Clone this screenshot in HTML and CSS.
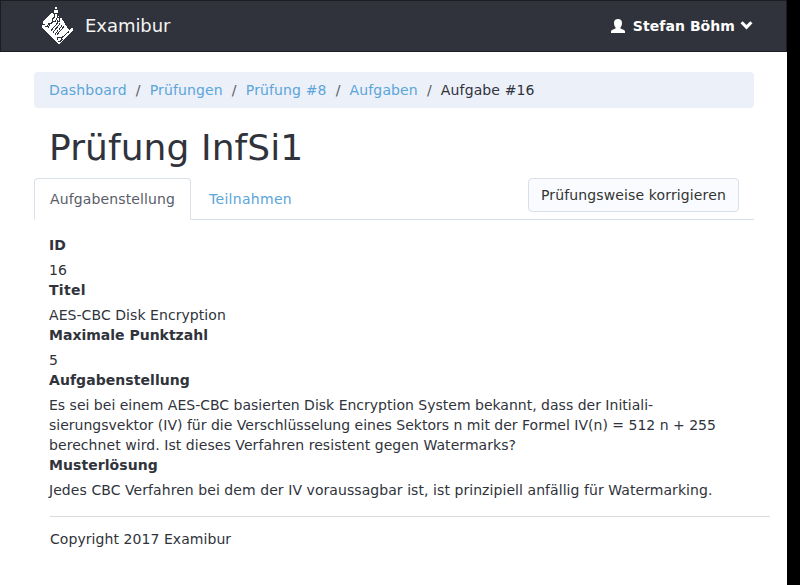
FILE: index.html
```
<!DOCTYPE html>
<html lang="de">
<head>
<meta charset="utf-8">
<title>Examibur</title>
<link rel="stylesheet" href="styles.css">
</head>
<body>
<div class="page">
  <header class="navbar">
    <a class="brand">
      <svg class="logo" viewBox="0 0 36 41" shape-rendering="crispEdges">
        <path fill="#fff" d="M11 8h3v5h7v-2l8 9v6h2v-1l2-2v3L19 39 2 23v-2l1-4z"/>
        <path fill="#30333b" d="M20 11l9 14 3-6-8-12z"/>
        <path fill="#fff" d="M15 2h2v3h1v3h-1v4h2v4h-6v-4h1V8h-1V5h2zM18 11l3 2 8 13 2-3h2v3L19 39l-5-5z"/>
        <g stroke="#30333b" stroke-width="1" fill="none">
          <path d="M13.500 5v3h1v4l-2 2v2h3l1-2 1 2h2v-3l-2-1V8M14 8.500h4M15 4.500h2M2 19.500h3M5 21.500h2l2-3h2l2-2M8 22.500l2-3M11 25.500l7-8M13 27.500l7-9M15 29.500l3-4M19 24.500l3-4M17 29.500l7-8M17 34.500l1-2h3l1 2-2 2h-2M21 33.500l8-7"/>
        </g>
      </svg>
      <span>Examibur</span>
    </a>
    <div class="user">
      <svg class="person" viewBox="0 0 14 14"><path fill="#fff" d="M7 0c2.700 0 4 1.600 4 4 0 2-.6 3.200-1.500 4.200v1.300l3.500 1.500c.7.400 1 .8 1 1.500V14H0v-1.500c0-.7.3-1.100 1-1.500l3.500-1.500V8.200C3.600 7.200 3 6 3 4c0-2.400 1.300-4 4-4z"/></svg>
      <span>Stefan Böhm</span>
      <svg class="chevron" viewBox="0 0 12 9"><path fill="#fff" d="M2.200.2 6 4 9.800.2 12 2.300 6 8.500 0 2.300z"/></svg>
    </div>
  </header>
  <main class="content">
    <nav class="breadcrumb">
      <a>Dashboard</a><i>/</i><a class="tight">Prüfungen</a><i>/</i><a class="tight">Prüfung #8</a><i>/</i><a class="tight">Aufgaben</a><i>/</i><span class="tight">Aufgabe #16</span>
    </nav>
    <h1>Prüfung InfSi1</h1>
    <div class="tabs">
      <a class="tab active">Aufgabenstellung</a>
      <a class="tab">Teilnahmen</a>
      <button class="btn">Prüfungsweise korrigieren</button>
    </div>
    <dl>
      <dt>ID</dt><dd>16</dd>
      <dt class="loose">Titel</dt><dd>AES-CBC Disk Encryption</dd>
      <dt class="flush">Maximale Punktzahl</dt><dd>5</dd>
      <dt>Aufgabenstellung</dt>
      <dd><span class="fit">Es sei bei einem AES-CBC basierten Disk Encryption System bekannt, dass der Initiali-<br>sierungsvektor (IV) für die Verschlüsselung eines Sektors n mit der Formel IV(n) = 512 n + 255</span><br>berechnet wird. Ist dieses Verfahren resistent gegen Watermarks?</dd>
      <dt>Musterlösung</dt><dd>Jedes CBC Verfahren bei dem der IV voraussagbar ist, ist prinzipiell anfällig für Watermarking.</dd>
    </dl>
  </main>
  <footer>Copyright 2017 Examibur</footer>
</div>
</body>
</html>
```
FILE: styles.css
```
* { box-sizing: border-box; }
html { background: #000; }
body {
  margin: 0;
  font: 14px/20px "DejaVu Sans", sans-serif;
  letter-spacing: 0.065px;
  color: #30333b;
}
.page { width: 787px; height: 585px; background: #fff; overflow: hidden; }
.navbar {
  height: 52px;
  padding: 0 33px 0 39px;
  display: flex;
  justify-content: space-between;
  background: #30333b;
  border: 1px solid #1b1d22;
  color: #fff;
}
.brand { display: flex; align-items: center; font-size: 18px; color: #f4f4f4; letter-spacing: -0.05px; }
.logo { width: 36px; height: 41px; margin: -1px 9px 0 0; }
.user { display: flex; align-items: center; font-weight: bold; }
.person { width: 14px; height: 14px; margin: -1px 8px 0 0; }
.chevron { width: 13px; height: 9px; margin: -2px 0 0 5px; }
.content { width: 720px; margin: 20px 0 0 34px; }
.breadcrumb {
  display: flex;
  height: 36px;
  padding: 8px 15px;
  background: #ecf0f9;
  border-radius: 4px;
  letter-spacing: 0.2px;
}
.breadcrumb .tight { letter-spacing: 0.13px; }
a { color: #5ba5d9; }
.breadcrumb i { font-style: normal; color: #555960; width: 23px; text-align: center; }
h1 {
  margin: 20px 15px 10px;
  font-size: 36px;
  line-height: 40px;
  font-weight: 400;
  letter-spacing: 0.08px;
}
.tabs { display: flex; height: 42px; border-bottom: 1px solid #d8e0ea; }
.tab {
  height: 42px;
  padding: 10px 16px 0;
  border: 1px solid transparent;
  margin-right: 1px;
  letter-spacing: 0.3px;
}
.tab.active {
  width: 157px;
  padding: 10px 0 0 15px;
  color: #595d68;
  background: #fff;
  border-color: #d8e0ea;
  border-bottom-color: #fff;
  border-radius: 4px 4px 0 0;
  letter-spacing: 0.13px;
}
.btn {
  height: 34px;
  width: 211px;
  margin: 0 15px 0 auto;
  padding: 0;
  font: inherit;
  letter-spacing: 0.13px;
  color: #333;
  background: #f9fbfe;
  border: 1px solid #d8e0ea;
  border-radius: 4px;
}
dl { margin: 15px 0 0 15px; white-space: nowrap; }
dt { font-weight: bold; margin-bottom: 5px; }
dt.loose { letter-spacing: 0.3px; }
dt.flush { letter-spacing: 0; }
dd { margin: 0; }
.fit { letter-spacing: 0.005px; }
footer {
  width: 720px;
  margin: 16px 0 0 50px;
  padding: 12px 0 0;
  border-top: 1px solid #d9dbdd;
}
```
